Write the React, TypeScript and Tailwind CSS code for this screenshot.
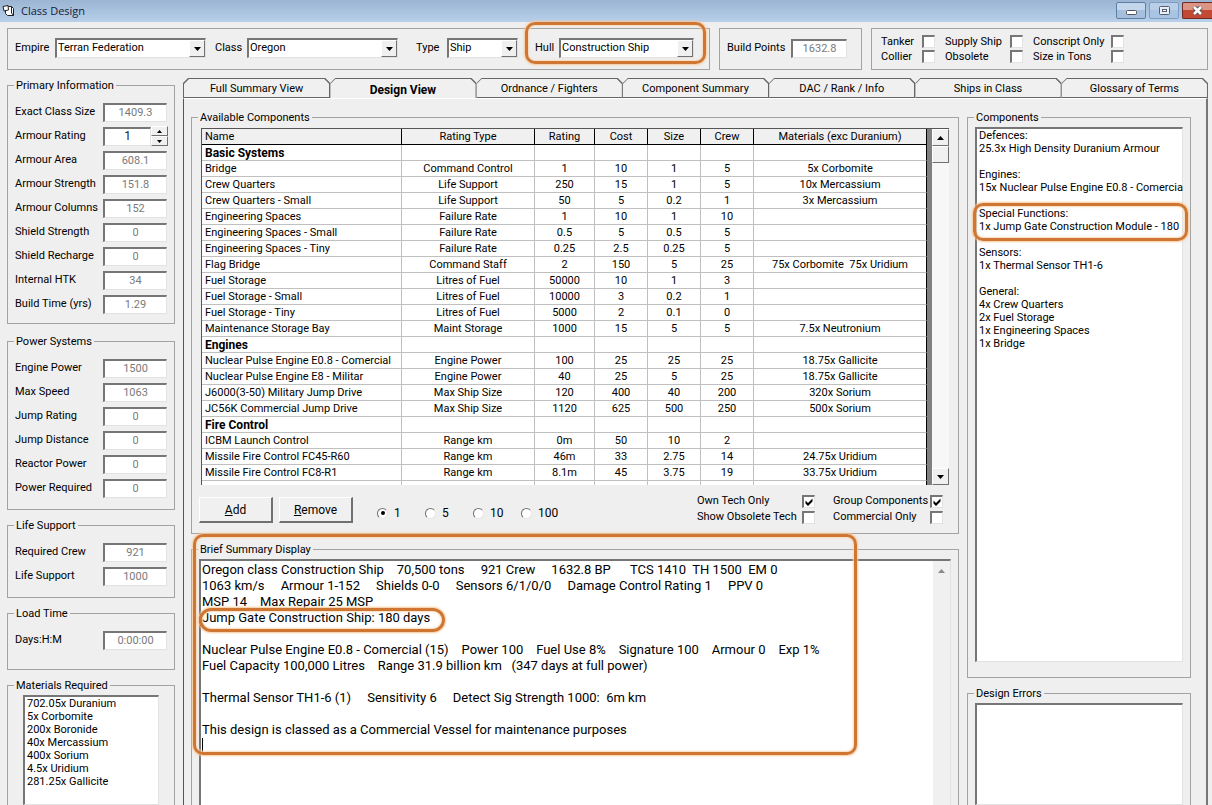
import { useState } from 'react'
import type { ReactNode } from 'react'
import clsx from 'clsx'

const SUNKEN = 'border border-t-2 border-l-2 border-t-[#767676] border-l-[#767676] border-r-[#e2e2e2] border-b-[#e2e2e2] bg-white'
const RAISED = 'border border-t-white border-l-white border-r-[#707070] border-b-[#707070] bg-[#f0f0f0]'
const RING = 'pointer-events-none absolute border-[3px] border-[#cf7632] shadow-[0_0_2px_1px_#f9c99a,inset_0_0_2px_1px_#f9d9b8]'

const PRIMARY = [
  ['Exact Class Size', '1409.3'],
  ['Armour Rating', '1'],
  ['Armour Area', '608.1'],
  ['Armour Strength', '151.8'],
  ['Armour Columns', '152'],
  ['Shield Strength', '0'],
  ['Shield Recharge', '0'],
  ['Internal HTK', '34'],
  ['Build Time (yrs)', '1.29'],
]

const POWER = [
  ['Engine Power', '1500'],
  ['Max Speed', '1063'],
  ['Jump Rating', '0'],
  ['Jump Distance', '0'],
  ['Reactor Power', '0'],
  ['Power Required', '0'],
]

const LIFE = [
  ['Required Crew', '921'],
  ['Life Support', '1000'],
]

const MATERIALS = [
  '702.05x Duranium',
  '5x Corbomite',
  '200x Boronide',
  '40x Mercassium',
  '400x Sorium',
  '4.5x Uridium',
  '281.25x Gallicite',
]

const TABS = [
  'Full Summary View',
  'Design View',
  'Ordnance / Fighters',
  'Component Summary',
  'DAC / Rank / Info',
  'Ships in Class',
  'Glossary of Terms',
]

const COLUMNS = ['Name', 'Rating Type', 'Rating', 'Cost', 'Size', 'Crew', 'Materials (exc Duranium)']

// a row with only a name is a group heading
const ROWS = [
  ['Basic Systems'],
  ['Bridge', 'Command Control', '1', '10', '1', '5', '5x Corbomite'],
  ['Crew Quarters', 'Life Support', '250', '15', '1', '5', '10x Mercassium'],
  ['Crew Quarters - Small', 'Life Support', '50', '5', '0.2', '1', '3x Mercassium'],
  ['Engineering Spaces', 'Failure Rate', '1', '10', '1', '10', ''],
  ['Engineering Spaces - Small', 'Failure Rate', '0.5', '5', '0.5', '5', ''],
  ['Engineering Spaces - Tiny', 'Failure Rate', '0.25', '2.5', '0.25', '5', ''],
  ['Flag Bridge', 'Command Staff', '2', '150', '5', '25', '75x Corbomite  75x Uridium'],
  ['Fuel Storage', 'Litres of Fuel', '50000', '10', '1', '3', ''],
  ['Fuel Storage - Small', 'Litres of Fuel', '10000', '3', '0.2', '1', ''],
  ['Fuel Storage - Tiny', 'Litres of Fuel', '5000', '2', '0.1', '0', ''],
  ['Maintenance Storage Bay', 'Maint Storage', '1000', '15', '5', '5', '7.5x Neutronium'],
  ['Engines'],
  ['Nuclear Pulse Engine E0.8 - Comercial', 'Engine Power', '100', '25', '25', '25', '18.75x Gallicite'],
  ['Nuclear Pulse Engine E8 - Militar', 'Engine Power', '40', '25', '5', '25', '18.75x Gallicite'],
  ['J6000(3-50) Military Jump Drive', 'Max Ship Size', '120', '400', '40', '200', '320x Sorium'],
  ['JC56K Commercial Jump Drive', 'Max Ship Size', '1120', '625', '500', '250', '500x Sorium'],
  ['Fire Control'],
  ['ICBM Launch Control', 'Range km', '0m', '50', '10', '2', ''],
  ['Missile Fire Control FC45-R60', 'Range km', '46m', '33', '2.75', '14', '24.75x Uridium'],
  ['Missile Fire Control FC8-R1', 'Range km', '8.1m', '45', '3.75', '19', '33.75x Uridium'],
  [''],
]

const SUMMARY = [
  'Oregon class Construction Ship    70,500 tons     921 Crew     1632.8 BP      TCS 1410  TH 1500  EM 0',
  '1063 km/s     Armour 1-152     Shields 0-0     Sensors 6/1/0/0     Damage Control Rating 1     PPV 0',
  'MSP 14    Max Repair 25 MSP',
  'Jump Gate Construction Ship: 180 days',
  '',
  'Nuclear Pulse Engine E0.8 - Comercial (15)    Power 100    Fuel Use 8%    Signature 100    Armour 0    Exp 1%',
  'Fuel Capacity 100,000 Litres    Range 31.9 billion km   (347 days at full power)',
  '',
  'Thermal Sensor TH1-6 (1)     Sensitivity 6     Detect Sig Strength 1000:  6m km',
  '',
  'This design is classed as a Commercial Vessel for maintenance purposes',
  '',
].join('\n')

const DESIGN = [
  ['Defences:', '25.3x High Density Duranium Armour'],
  ['Engines:', '15x Nuclear Pulse Engine E0.8 - Comercia'],
  ['Special Functions:', '1x Jump Gate Construction Module - 180'],
  ['Sensors:', '1x Thermal Sensor TH1-6'],
  ['General:', '4x Crew Quarters', '2x Fuel Storage', '1x Engineering Spaces', '1x Bridge'],
]

function Group({ title, className, children }: { title: string; className?: string; children?: ReactNode }) {
  return (
    <fieldset className={clsx('min-w-0 border border-[#a3a3a3] pl-[7px]', className)}>
      <legend className="-ml-px h-3.5 px-0.5 leading-[15px]">{title}</legend>
      {children}
    </fieldset>
  )
}

function Arrow({ up, className }: { up?: boolean; className?: string }) {
  return (
    <svg className={className} width="7" height="4" viewBox="0 0 7 4" fill="currentColor" aria-hidden="true">
      <path d={up ? 'M0 4h7L3.5 0z' : 'M0 0h7L3.5 4z'} />
    </svg>
  )
}

function Field({ label, value, spin }: { label: string; value: string; spin?: boolean }) {
  return (
    <div className="flex h-6 items-center">
      <label htmlFor={label} className="w-22 pt-px whitespace-nowrap">{label}</label>
      <input
        id={label}
        defaultValue={value}
        readOnly={!spin}
        className={clsx('h-[19px] pb-px text-center', SUNKEN, spin ? 'w-12 text-[12px] text-[#222]' : 'w-16 text-[#7a7a7a]')}
      />
      {spin && (
        <div className="flex flex-col">
          <button aria-label="Increase" className={clsx('flex h-2.5 w-[17px] items-center justify-center', RAISED)}>
            <Arrow up className="h-[3px] w-[5px]" />
          </button>
          <button aria-label="Decrease" className={clsx('flex h-2.5 w-[17px] items-center justify-center', RAISED)}>
            <Arrow className="h-[3px] w-[5px]" />
          </button>
        </div>
      )}
    </div>
  )
}

function Combo({ label, value, labelClass, className }: { label: string; value: string; labelClass: string; className: string }) {
  return (
    <div className="flex items-center">
      <label htmlFor={label} className={labelClass}>{label}</label>
      <div className={clsx('relative', className)}>
        <select id={label} className={clsx('block h-5 w-full appearance-none pr-4 pl-px outline-none', SUNKEN)}>
          <option>{value}</option>
        </select>
        <span className={clsx('pointer-events-none absolute top-0.5 right-px flex h-[17px] w-4 items-center justify-center', RAISED)}>
          <Arrow />
        </span>
      </div>
    </div>
  )
}

function Check({ label, checked }: { label: string; checked?: boolean }) {
  return (
    <label className="flex items-center justify-between whitespace-nowrap">
      {label}
      <span className="relative">
        <input type="checkbox" defaultChecked={checked} className={clsx('peer block size-[13px] appearance-none', SUNKEN)} />
        <svg className="pointer-events-none absolute top-[3px] left-[3px] hidden peer-checked:block" width="8" height="8" viewBox="0 0 8 8">
          <path d="M0.5 2.5v3L3 8l4.5-4.5v-3L3 5z" fill="#000" />
        </svg>
      </span>
    </label>
  )
}

function TitleBar() {
  return (
    <header className="flex h-[22px] shrink-0 items-start bg-linear-to-b from-[#9ab4d2] to-[#b8d0ea] pl-0.5">
      <svg className="mt-1 shrink-0" width="14" height="13" viewBox="0 0 14 13" aria-hidden="true">
        <path d="M3.500 5v4.500l2 2h6v-7l-2-2h-4z" fill="#fff" stroke="#222" />
        <path d="M1 2.500l5-1 .5 4.500-4.500 1z" fill="#fff" stroke="#222" />
        <path d="M9.500 2.500v6.500l2 2.500" fill="none" stroke="#222" />
      </svg>
      <h1 className="ml-[5px] flex-1 font-['Open_Sans',sans-serif] text-[11px] leading-[22px] text-[#16213a]">Class Design</h1>
      <div className="mt-0.5 flex shrink-0 gap-[3px]">
        <button aria-label="Minimize" className="flex h-[17px] w-[30px] items-center justify-center rounded-[2px] border border-[#5f7ea3] bg-linear-to-b from-[#c3d6eb] from-50% to-[#a5c0df] to-50%">
          <svg width="11" height="5" viewBox="0 0 11 5" className="mt-1"><rect x=".5" y=".5" width="10" height="4" rx="1" fill="#fff" stroke="#555" /></svg>
        </button>
        <button aria-label="Maximize" className="flex h-[17px] w-[30px] items-center justify-center rounded-[2px] border border-[#7e9dc2] bg-linear-to-b from-[#b9cfe8] from-50% to-[#a9c4e2] to-50%">
          <svg width="11" height="9" viewBox="0 0 11 9"><rect x=".5" y=".5" width="10" height="8" rx="1" fill="#e8eef5" stroke="#555f70" /><rect x="3.500" y="3.500" width="4" height="2" fill="#fff" stroke="#555f70" /></svg>
        </button>
        <button aria-label="Close" className="flex h-[17px] w-[30px] items-center justify-center rounded-l-[2px] border border-r-0 border-[#6d2a24] bg-linear-to-b from-[#dc9484] from-50% to-[#c24a35] to-50%">
          <svg width="13" height="9" viewBox="0 0 13 9"><path d="M3 1l7 7M10 1L3 8" stroke="#555" strokeWidth="4.500" /><path d="M3 1l7 7M10 1L3 8" stroke="#fff" strokeWidth="2.600" /></svg>
        </button>
      </div>
    </header>
  )
}

function TopBar() {
  return (
    <div className="flex h-[42px] shrink-0 gap-[9px]">
      <div className="flex items-center border border-[#a3a3a3] pr-[15px] pb-0.5 pl-[7px]">
        <Combo label="Empire" value="Terran Federation" labelClass="w-10" className="w-[151px]" />
        <div className="w-[9px]" />
        <Combo label="Class" value="Oregon" labelClass="w-8" className="w-[151px]" />
        <div className="w-[18px]" />
        <Combo label="Type" value="Ship" labelClass="w-[31px]" className="w-[71px]" />
        <div className="relative ml-[17px]">
          <Combo label="Hull" value="Construction Ship" labelClass="w-6" className="w-[135px]" />
          <div className={clsx('-top-4 -right-3 -bottom-1.5 -left-2.5 rounded-[10px]', RING)} />
        </div>
      </div>
      <div className="flex items-center border border-[#a3a3a3] pr-3.5 pb-0.5 pl-[7px]">
        <label htmlFor="build-points" className="w-16 whitespace-nowrap">Build Points</label>
        <input id="build-points" readOnly defaultValue="1632.8" className={clsx('h-[19px] w-14 pb-px text-center text-[#7a7a7a]', SUNKEN)} />
      </div>
      <div className="grid flex-1 grid-cols-[54px_78px_91px] content-center gap-x-2.5 border border-[#a3a3a3] pl-[9px] leading-[15px]">
        <Check label="Tanker" />
        <Check label="Supply Ship" />
        <Check label="Conscript Only" />
        <Check label="Collier" />
        <Check label="Obsolete" />
        <Check label="Size in Tons" />
      </div>
    </div>
  )
}

function Sidebar() {
  return (
    <aside className="flex w-[168px] shrink-0 flex-col">
      <Group title="Primary Information" className="pt-2 pb-[7px]">
        {PRIMARY.map(([label, value]) => (
          <Field key={label} label={label} value={value} spin={label === 'Armour Rating'} />
        ))}
      </Group>
      <Group title="Power Systems" className="mt-2.5 pt-2 pb-[9px]">
        {POWER.map(([label, value]) => <Field key={label} label={label} value={value} />)}
      </Group>
      <Group title="Life Support" className="mt-2 pt-2 pb-[9px]">
        {LIFE.map(([label, value]) => <Field key={label} label={label} value={value} />)}
      </Group>
      <Group title="Load Time" className="mt-2 pt-2 pb-[17px]">
        <Field label="Days:H:M" value="0:00:00" />
      </Group>
      <Group title="Materials Required" className="mt-2 flex-1 border-b-0 pt-[3px]">
        <ul className={clsx('mr-[15px] ml-2 h-full pl-0.5 leading-[13px]', SUNKEN)}>
          {MATERIALS.map(m => <li key={m}>{m}</li>)}
        </ul>
      </Group>
    </aside>
  )
}

function ComponentTable() {
  return (
    <div className="mx-0.5 flex h-[357px] overflow-hidden border-t border-l border-[#555] bg-white">
      <div className="min-w-0 flex-1 overflow-hidden border-r-[5px] border-[#808080]">
        <table className="w-full table-fixed border-separate border-spacing-0">
          <colgroup>
            <col className="w-[200px]" />
            <col className="w-[133px]" />
            <col className="w-[60px]" />
            <col className="w-[53px]" />
            <col className="w-[53px]" />
            <col className="w-[53px]" />
            <col />
          </colgroup>
          <thead>
            <tr>
              {COLUMNS.map((c, i) => (
                <th key={c} className={clsx('h-4 border-r border-b border-black bg-[#f0f0f0] pt-px leading-[14px] font-normal', i === 0 ? 'pl-[3px] text-left' : 'text-center')}>
                  {c}
                </th>
              ))}
            </tr>
          </thead>
          <tbody>
            {ROWS.map((row, r) => (
              <tr key={r}>
                {COLUMNS.map((c, i) => (
                  <td
                    key={c}
                    className={clsx(
                      'h-4 overflow-hidden border-r border-b border-[#c0c0c0] pt-px leading-[14px] whitespace-pre last:border-r-black',
                      i === 0 ? 'pl-[3px]' : 'text-center',
                      row.length === 1 && 'text-[12px] font-bold',
                    )}
                  >
                    {row[i] ?? ''}
                  </td>
                ))}
              </tr>
            ))}
          </tbody>
        </table>
      </div>
      <div className="flex w-[17px] flex-col bg-[#f7f7f7]">
        <button aria-label="Scroll up" className={clsx('flex h-[17px] items-center justify-center', RAISED)}><Arrow up /></button>
        <div className={clsx('h-[17px]', RAISED)} />
        <div className="flex-1" />
        <button aria-label="Scroll down" className={clsx('flex h-[17px] items-center justify-center', RAISED)}><Arrow /></button>
      </div>
    </div>
  )
}

function Actions() {
  const [count, setCount] = useState(1)

  return (
    <div className="flex items-start justify-between pt-2">
      <div className="flex items-center pt-1">
        <button className={clsx('h-[26px] w-[74px] border-r-2 border-b-2 text-[12px]', RAISED)}><u>A</u>dd</button>
        <button className={clsx('ml-1.5 h-[26px] w-[74px] border-r-2 border-b-2 text-[12px]', RAISED)}><u>R</u>emove</button>
        <div className="ml-6 flex pt-1.5">
          {[1, 5, 10, 100].map(n => (
            <label key={n} className="flex w-12 items-center gap-1.5 text-[12px]">
              <input
                type="radio"
                name="count"
                checked={count === n}
                onChange={() => setCount(n)}
                className="flex size-[11px] appearance-none items-center justify-center rounded-full border border-t-[#707070] border-r-[#e6e6e6] border-b-[#e6e6e6] border-l-[#707070] bg-white before:size-1 before:rounded-full checked:before:bg-black"
              />
              {n}
            </label>
          ))}
        </div>
      </div>
      <div className="mr-2 grid grid-cols-[118px_110px] gap-x-[18px] leading-4">
        <Check label="Own Tech Only" checked />
        <Check label="Group Components" checked />
        <Check label="Show Obsolete Tech" />
        <Check label="Commercial Only" />
      </div>
    </div>
  )
}

function DesignPanel() {
  return (
    <div className="flex min-h-0 flex-1 gap-2 border-t border-r-2 border-l border-t-white border-r-[#777] border-l-[#555] pt-[11px] pr-[15px] pl-[7px]">
      <div className="flex min-w-0 flex-1 flex-col">
        <Group title="Available Components" className="h-[424px] shrink-0 pt-1 pr-[7px]">
          <ComponentTable />
          <Actions />
        </Group>
        <div className="relative mt-2 flex min-h-0 flex-1 flex-col">
          <Group title="Brief Summary Display" className="flex-1 border-b-0 pt-[3px] pr-[7px]">
            <div className={clsx('flex h-full border-b-0', SUNKEN)}>
              <textarea
                aria-label="Brief Summary Display"
                defaultValue={SUMMARY}
                className="h-full flex-1 resize-none overflow-hidden pt-px pl-px text-[13px] leading-4 whitespace-pre outline-none"
              />
              <div className="flex w-[17px] justify-center bg-[#f0f0f0] pt-2 text-[#8a8a8a]"><Arrow up /></div>
            </div>
          </Group>
          <div className="absolute top-[196px] left-[11px] h-3.5 w-px bg-black" />
          <div className={clsx('-top-2 right-[102px] left-0.5 h-[221px] rounded-[10px]', RING)} />
          <div className={clsx('top-[66px] left-2 h-6 w-[246px] rounded-[12px]', RING)} />
        </div>
      </div>
      <div className="flex w-[224px] shrink-0 flex-col">
        <Group title="Components" className="shrink-0 pt-[3px] pr-[7px] pb-[15px]">
          <div className={clsx('h-[535px] pl-0.5 leading-[13px] whitespace-nowrap', SUNKEN)}>
            {DESIGN.map(([heading, ...items]) => (
              <div key={heading} className="relative mb-[13px]">
                <h2>{heading}</h2>
                <ul>
                  {items.map(item => <li key={item}>{item}</li>)}
                </ul>
                {heading === 'Special Functions:' && (
                  <div className={clsx('-top-1 -right-1.5 -bottom-2 -left-1.5 rounded-[10px]', RING)} />
                )}
              </div>
            ))}
          </div>
        </Group>
        <Group title="Design Errors" className="mt-2 flex-1 border-b-0 pt-[3px] pr-[7px]">
          <div className={clsx('h-full', SUNKEN)} />
        </Group>
      </div>
    </div>
  )
}

export default function App() {
  const [tab, setTab] = useState('Design View')

  return (
    <div className="flex h-screen flex-col overflow-hidden bg-[#efefef] font-[Roboto,'Liberation_Sans',sans-serif] text-[11px] text-black">
      <TitleBar />
      <main className="flex min-h-0 flex-1 flex-col gap-2 pt-1.5 pr-1 pl-[7px]">
        <TopBar />
        <div className="flex min-h-0 flex-1 gap-2">
          <Sidebar />
          <div className="flex min-w-0 flex-1 flex-col">
            <div role="tablist" className="flex h-5 shrink-0">
              {TABS.map(t => (
                <button
                  key={t}
                  role="tab"
                  aria-selected={tab === t}
                  onClick={() => setTab(t)}
                  className={clsx(
                    'flex-1 bg-[#666] pt-px pr-px [clip-path:polygon(0_100%,0_5px,5px_0,calc(100%-5px)_0,100%_5px,100%_100%)] first:pl-px',
                    tab === t ? 'text-[12px] font-bold' : 'pb-px',
                  )}
                >
                  <span className="flex h-full items-center justify-center bg-[#f0f0f0] pt-0.5 [clip-path:polygon(0_100%,0_5px,5px_0,calc(100%-5px)_0,100%_5px,100%_100%)]">
                    {t}
                  </span>
                </button>
              ))}
            </div>
            <DesignPanel />
          </div>
        </div>
      </main>
    </div>
  )
}
